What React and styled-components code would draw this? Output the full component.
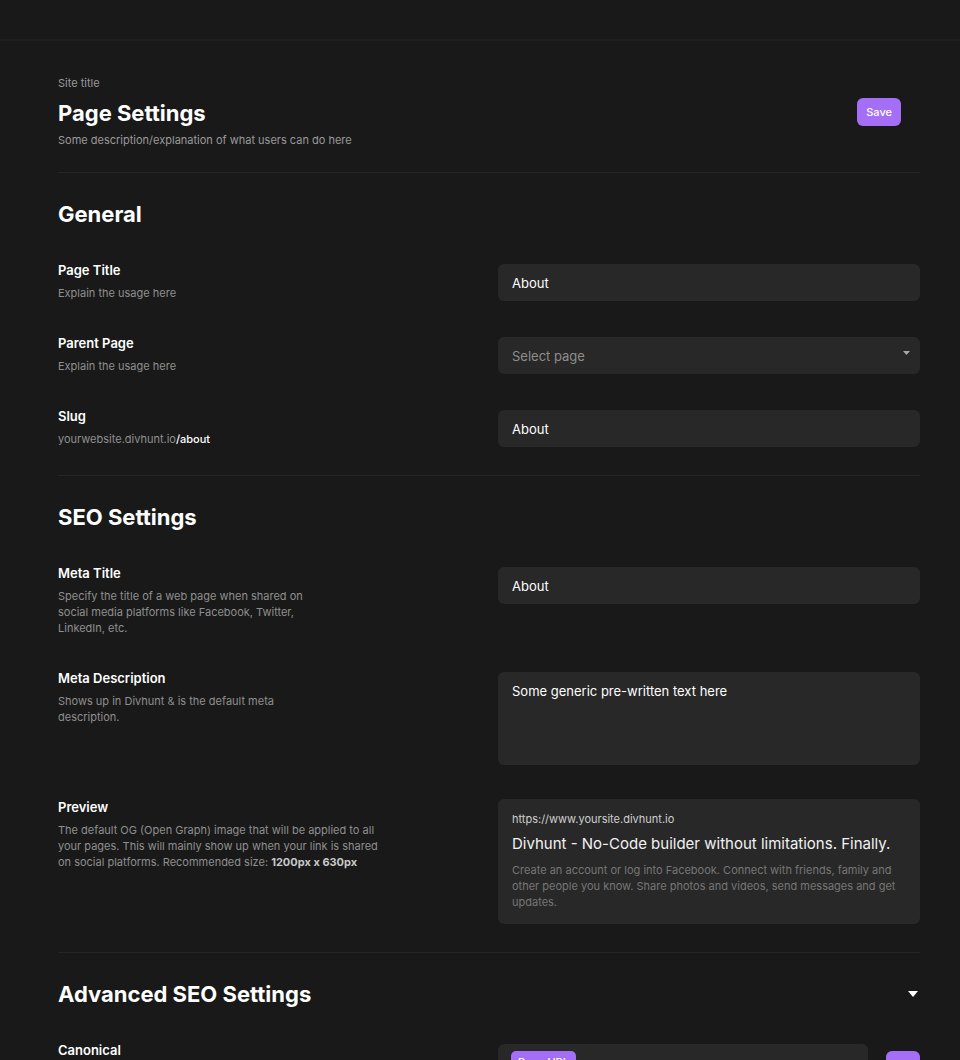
import React from "react";
import styled, { createGlobalStyle } from "styled-components";

const Global = createGlobalStyle`
  body {
    margin: 0;
    background: #191919;
    font-family: Inter, "Noto Sans", sans-serif;
    color: #fff;
  }
`;

function Page() {
  const rows = [
    { label: "Page Title", desc: "Explain the usage here", value: "About" },
  ];
  return (
    <Wrapper>
      <Global />
      <TopBar />
      <Main>
        <Header>
          <div>
            <SiteTitle>Site title</SiteTitle>
            <PageTitle>Page Settings</PageTitle>
            <HeaderDesc>Some description/explanation of what users can do here</HeaderDesc>
          </div>
          <SaveButton>Save</SaveButton>
        </Header>

        <Section>
          <SectionTitle>General</SectionTitle>
          {rows.map((r) => (
            <Row key={r.label}>
              <Info>
                <Label>{r.label}</Label>
                <Desc>{r.desc}</Desc>
              </Info>
              <Input>{r.value}</Input>
            </Row>
          ))}
          <Row>
            <Info>
              <Label>Parent Page</Label>
              <Desc>Explain the usage here</Desc>
            </Info>
            <Input muted>
              Select page
              <SelectArrow width="7" height="4" viewBox="0 0 7 4">
                <path d="M0 0h7L3.5 4z" fill="#a8a8a8" />
              </SelectArrow>
            </Input>
          </Row>
          <Row>
            <Info>
              <Label>Slug</Label>
              <Desc>
                yourwebsite.divhunt.io<strong>/about</strong>
              </Desc>
            </Info>
            <Input>About</Input>
          </Row>
        </Section>

        <Section>
          <SectionTitle>SEO Settings</SectionTitle>
          <Row>
            <Info>
              <Label>Meta Title</Label>
              <Desc width="255px">
                Specify the title of a web page when shared on social media platforms like
                Facebook, Twitter, LinkedIn, etc.
              </Desc>
            </Info>
            <Input>About</Input>
          </Row>
          <Row>
            <Info>
              <Label>Meta Description</Label>
              <Desc width="255px">Shows up in Divhunt &amp; is the default meta description.</Desc>
            </Info>
            <TextArea>Some generic pre-written text here</TextArea>
          </Row>
          <Row>
            <Info>
              <Label>Preview</Label>
              <Desc width="330px">
                The default OG (Open Graph) image that will be applied to all your pages. This
                will mainly show up when your link is shared on social platforms. Recommended
                size: <b>1200px x 630px</b>
              </Desc>
            </Info>
            <PreviewCard>
              <PreviewUrl>https://www.yoursite.divhunt.io</PreviewUrl>
              <PreviewTitle>Divhunt - No-Code builder without limitations. Finally.</PreviewTitle>
              <PreviewText>
                Create an account or log into Facebook. Connect with friends, family and other
                people you know. Share photos and videos, send messages and get updates.
              </PreviewText>
            </PreviewCard>
          </Row>
        </Section>

        <Section last>
          <SectionHead>
            <SectionTitle>Advanced SEO Settings</SectionTitle>
            <svg width="10" height="6" viewBox="0 0 10 6">
              <path d="M0 0h10L5 6z" fill="#fff" />
            </svg>
          </SectionHead>
          <Row>
            <Info>
              <Label>Canonical</Label>
              <Desc>Explain the usage here</Desc>
            </Info>
            <CanonicalWrap>
              <Input>
                <Tag>Page URL</Tag>
              </Input>
              <SmallButton>Add</SmallButton>
            </CanonicalWrap>
          </Row>
        </Section>
      </Main>
    </Wrapper>
  );
}

export default function App() {
  return <Page />;
}

const Wrapper = styled.div`
  min-height: 1060px;
  background: #191919;
`;

const TopBar = styled.div`
  height: 39px;
  border-bottom: 2px solid #202020;
`;

const Main = styled.main`
  padding: 0 40px 0 58px;
`;

const Header = styled.header`
  display: flex;
  align-items: center;
  justify-content: space-between;
  padding: 34px 19px 24px 0;
  border-bottom: 1px solid #252525;
`;

const SiteTitle = styled.div`
  font-size: 11px;
  line-height: 16px;
  color: #9a9a9a;
`;

const PageTitle = styled.h1`
  margin: 8px 0 5px;
  font-size: 22px;
  line-height: 28px;
  font-weight: 700;
`;

const HeaderDesc = styled.div`
  font-size: 11px;
  line-height: 16px;
  color: #9a9a9a;
`;

const SaveButton = styled.button`
  height: 28px;
  padding: 0 9px;
  border: 0;
  border-radius: 6px;
  background: #a46ff6;
  color: #fff;
  font-family: inherit;
  font-size: 11px;
  font-weight: 500;
`;

const Section = styled.section`
  display: flex;
  flex-direction: column;
  gap: 33px;
  padding: 27px 0 ${(p) => (p.last ? "0" : "28px")};
  border-bottom: ${(p) => (p.last ? "none" : "1px solid #252525")};
`;

const SectionHead = styled.div`
  display: flex;
  align-items: center;
  justify-content: space-between;
  padding-right: 2px;
`;

const SectionTitle = styled.h2`
  margin: 0;
  font-size: 22px;
  line-height: 28px;
  font-weight: 700;
`;

const Row = styled.div`
  display: grid;
  grid-template-columns: 440px 1fr;
  align-items: start;
`;

const Info = styled.div`
  display: flex;
  flex-direction: column;
  gap: 6px;
`;

const Label = styled.div`
  font-size: 13px;
  line-height: 18px;
  font-weight: 600;
`;

const Desc = styled.div`
  max-width: ${(p) => p.width || "none"};
  font-size: 11px;
  line-height: 16px;
  color: #8f8f8f;
  strong {
    color: #fff;
    font-weight: 500;
  }
  b {
    color: #c8c8c8;
    font-weight: 700;
  }
`;

const Input = styled.div`
  position: relative;
  display: flex;
  align-items: center;
  height: 37px;
  margin-top: 3px;
  padding: 0 14px;
  border-radius: 6px;
  background: #282828;
  font-size: 13px;
  color: ${(p) => (p.muted ? "#8d8d8d" : "#fff")};
  flex: 1;
`;

const SelectArrow = styled.svg`
  position: absolute;
  right: 10px;
  top: 14px;
`;

const TextArea = styled.div`
  height: 93px;
  margin-top: 3px;
  padding: 10px 14px;
  box-sizing: border-box;
  border-radius: 6px;
  background: #282828;
  font-size: 13px;
  line-height: 18px;
`;

const PreviewCard = styled.div`
  margin-top: 1px;
  padding: 12px 14px 14px;
  border-radius: 6px;
  background: #282828;
`;

const PreviewUrl = styled.div`
  font-size: 11px;
  line-height: 16px;
  color: #cfcfcf;
`;

const PreviewTitle = styled.div`
  margin: 7px 0 8px;
  font-size: 15px;
  line-height: 20px;
  color: #f2f2f2;
`;

const PreviewText = styled.div`
  font-size: 11px;
  line-height: 16px;
  color: #767676;
`;

const CanonicalWrap = styled.div`
  display: flex;
  align-items: flex-start;
  gap: 18px;
`;

const Tag = styled.span`
  position: absolute;
  top: 7px;
  left: 13px;
  padding: 4px 7px;
  border-radius: 5px;
  background: #a46ff6;
  font-size: 11px;
  line-height: 14px;
  font-weight: 500;
`;

const SmallButton = styled.button`
  width: 34px;
  height: 28px;
  margin-top: 10px;
  padding: 0;
  border: 0;
  border-radius: 6px;
  background: #a46ff6;
  color: #fff;
  font-family: inherit;
  font-size: 11px;
  font-weight: 500;
`;
